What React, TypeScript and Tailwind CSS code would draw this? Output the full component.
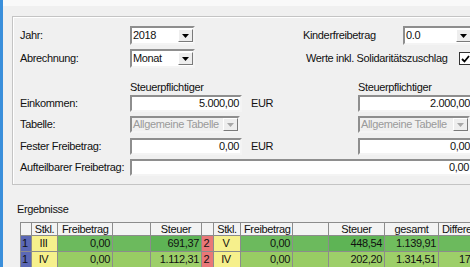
import React from 'react'

const FONT = "font-['Liberation_Sans',Arial,sans-serif] text-[11px] tracking-[-0.35px] text-[#111]"

function Arrow({ disabled }: { disabled?: boolean }) {
  return (
    <svg width="7" height="4" viewBox="0 0 7 4">
      <path d="M0 0h7L3.5 4z" fill={disabled ? '#a8a8a8' : '#000'} />
    </svg>
  )
}

function Combo({ value, width, disabled }: { value: string; width: string; disabled?: boolean }) {
  return (
    <div
      className={`${width} flex h-full items-center border-2 border-t-[#8e8e8e] border-l-[#8e8e8e] border-r-[#f4f4f4] border-b-[#f4f4f4] ${
        disabled ? 'bg-[#f0f0f0] text-[#9a9a9a]' : 'bg-white'
      }`}
    >
      <span className="flex-1 pl-[1px] leading-none">{value}</span>
      <span className="flex h-[13px] w-[15px] items-center justify-center border border-t-white border-l-white border-r-[#7a7a7a] border-b-[#7a7a7a] bg-[#eeeeee]">
        <Arrow disabled={disabled} />
      </span>
    </div>
  )
}

function Input({ value, width }: { value: string; width: string }) {
  return (
    <div
      className={`${width} flex h-full items-center justify-end border-2 border-t-[#8e8e8e] border-l-[#8e8e8e] border-r-[#f4f4f4] border-b-[#f4f4f4] bg-white pr-[1px]`}
    >
      {value}
    </div>
  )
}

type Cell = { t?: string; w: string; bg: string; align?: string }

const COLS = ['w-[11px]', 'w-[26px]', 'w-[55px]', 'w-[38px]', 'w-[51px]', 'w-[12px]', 'w-[27px]', 'w-[52px]', 'w-[36px]', 'w-[56px]', 'w-[54px]', 'w-[60px]']
const HEAD = ['', 'Stkl.', 'Freibetrag', '', 'Steuer', '', 'Stkl.', 'Freibetrag', '', 'Steuer', 'gesamt', 'Differenz']
const HEAD_ALIGN = ['', 'justify-center', 'justify-start pl-[4px]', '', 'justify-center', '', 'justify-center', 'justify-start pl-[3px]', '', 'justify-center', 'justify-center', 'justify-start pl-[3px]']

const ROWS: Cell[][] = [
  [
    { t: '1', w: COLS[0], bg: 'bg-[#5b68b6]', align: 'justify-center' },
    { t: 'III', w: COLS[1], bg: 'bg-[#f6f08c]', align: 'justify-center' },
    { t: '0,00', w: COLS[2], bg: 'bg-[#6cba5d]' },
    { w: COLS[3], bg: 'bg-[#6cba5d]' },
    { t: '691,37', w: COLS[4], bg: 'bg-[#5eb455]' },
    { t: '2', w: COLS[5], bg: 'bg-[#e97777]', align: 'justify-center' },
    { t: 'V', w: COLS[6], bg: 'bg-[#f6f08c]', align: 'justify-center' },
    { t: '0,00', w: COLS[7], bg: 'bg-[#6cba5d]' },
    { w: COLS[8], bg: 'bg-[#6cba5d]' },
    { t: '448,54', w: COLS[9], bg: 'bg-[#5eb455]' },
    { t: '1.139,91', w: COLS[10], bg: 'bg-[#70bd5e]' },
    { w: COLS[11], bg: 'bg-[#6cba5d]' },
  ],
  [
    { t: '1', w: COLS[0], bg: 'bg-[#5b68b6]', align: 'justify-center' },
    { t: 'IV', w: COLS[1], bg: 'bg-[#f6f08c]', align: 'justify-center' },
    { t: '0,00', w: COLS[2], bg: 'bg-[#98cc64]' },
    { w: COLS[3], bg: 'bg-[#98cc64]' },
    { t: '1.112,31', w: COLS[4], bg: 'bg-[#9dcf69]' },
    { t: '2', w: COLS[5], bg: 'bg-[#e97777]', align: 'justify-center' },
    { t: 'IV', w: COLS[6], bg: 'bg-[#f6f08c]', align: 'justify-center' },
    { t: '0,00', w: COLS[7], bg: 'bg-[#98cc64]' },
    { w: COLS[8], bg: 'bg-[#98cc64]' },
    { t: '202,20', w: COLS[9], bg: 'bg-[#9dcf69]' },
    { t: '1.314,51', w: COLS[10], bg: 'bg-[#9dcf69]' },
    { t: '175,14', w: COLS[11], bg: 'bg-[#9dcf69]', align: 'justify-start pl-[20px]' },
  ],
]

export default function App() {
  return (
    <div className={`flex h-[267px] w-[470px] overflow-hidden bg-[#f0f0f0] ${FONT}`}>
      <div className="w-[3px] shrink-0 bg-[#3a8fdb]" />
      <div className="flex min-w-0 flex-1 flex-col overflow-hidden">
        <div className="h-[6px] shrink-0 bg-[#f9f9f9]" />

        {/* Eingaben */}
        <div className="ml-[9px] mt-[10px] w-[490px] shrink-0 border border-[#c4c4c4] pb-[8px] pl-[7px] pt-[9px] shadow-[inset_1px_1px_0_#ffffff]">
          <div className="flex h-[19px] items-center">
            <span className="w-[110px]">Jahr:</span>
            <Combo value="2018" width="w-[65px]" />
            <span className="w-[108px]" />
            <span className="w-[100px]">Kinderfreibetrag</span>
            <Combo value="0.0" width="w-[70px]" />
          </div>
          <div className="mt-[4px] flex h-[19px] items-center">
            <span className="w-[110px]">Abrechnung:</span>
            <Combo value="Monat" width="w-[65px]" />
            <span className="w-[111px]" />
            <span className="w-[153px]">Werte inkl. Solidaritätszuschlag</span>
            <span className="flex h-[13px] w-[13px] items-center justify-center border border-[#333] bg-white">
              <svg width="9" height="8" viewBox="0 0 9 8">
                <path d="M1 4l2.5 2.5L8 1" fill="none" stroke="#000" strokeWidth="1.8" />
              </svg>
            </span>
          </div>
          <div className="mt-[11px] flex h-[16px] items-center">
            <span className="w-[110px]" />
            <span className="w-[228px]">Steuerpflichtiger</span>
            <span>Steuerpflichtiger</span>
          </div>
          <div className="flex h-[17px] items-center">
            <span className="w-[110px]">Einkommen:</span>
            <Input value="5.000,00" width="w-[112px]" />
            <span className="w-[116px] pl-[9px]">EUR</span>
            <Input value="2.000,00" width="w-[115px]" />
          </div>
          <div className="mt-[4px] flex h-[17px] items-center">
            <span className="w-[110px]">Tabelle:</span>
            <Combo value="Allgemeine Tabelle" width="w-[110px]" disabled />
            <span className="w-[118px]" />
            <Combo value="Allgemeine Tabelle" width="w-[112px]" disabled />
          </div>
          <div className="mt-[5px] flex h-[17px] items-center">
            <span className="w-[110px]">Fester Freibetrag:</span>
            <Input value="0,00" width="w-[112px]" />
            <span className="w-[116px] pl-[9px]">EUR</span>
            <Input value="0,00" width="w-[115px]" />
          </div>
          <div className="mt-[4px] flex h-[17px] items-center">
            <span className="w-[110px]">Aufteilbarer Freibetrag:</span>
            <Input value="0,00" width="w-[342px]" />
          </div>
        </div>

        {/* Ergebnisse */}
        <div className="ml-[14px] mt-[17px] h-[14px] leading-[14px]">Ergebnisse</div>
        <div className="ml-[17px] mt-[6px] w-[520px] shrink-0 border-l border-t border-[#8c8c8c]">
          <div className="flex h-[13px]">
            {HEAD.map((h, i) => (
              <div
                key={i}
                className={`${COLS[i]} flex shrink-0 items-center overflow-hidden whitespace-nowrap border-b border-r border-[#8c8c8c] bg-[#f3f3f3] leading-none ${HEAD_ALIGN[i]}`}
              >
                {h}
              </div>
            ))}
          </div>
          {ROWS.map((row, r) => (
            <div key={r} className="flex h-[16px]">
              {row.map((c, i) => (
                <div
                  key={i}
                  className={`${c.w} ${c.bg} flex shrink-0 items-center overflow-hidden whitespace-nowrap border-b border-r border-[#8c8c8c] pr-[2px] leading-none ${
                    c.align ?? 'justify-end'
                  }`}
                >
                  {c.t}
                </div>
              ))}
            </div>
          ))}
        </div>
      </div>
    </div>
  )
}
